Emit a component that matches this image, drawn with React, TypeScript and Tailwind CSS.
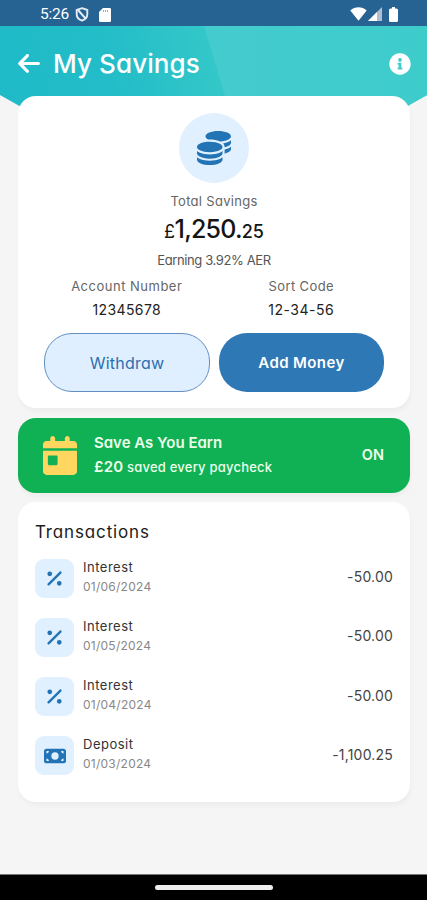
import { FaArrowLeft, FaCalendarDay, FaCoins, FaMoneyBill, FaPercent } from "react-icons/fa6";
import { FaInfoCircle } from "react-icons/fa";

const transactions = [
  { id: 1, title: "Interest", date: "01/06/2024", amount: "-50.00", icon: FaPercent },
  { id: 2, title: "Interest", date: "01/05/2024", amount: "-50.00", icon: FaPercent },
  { id: 3, title: "Interest", date: "01/04/2024", amount: "-50.00", icon: FaPercent },
  { id: 4, title: "Deposit", date: "01/03/2024", amount: "-1,100.25", icon: FaMoneyBill },
];

function StatusBar() {
  return (
    <div className="flex h-[26px] items-center bg-[#266292] pl-10 pr-[29px] text-white">
      <span className="mt-[3px] w-[30px] font-[Roboto] text-[15.5px] leading-none tracking-[-0.2px]">5:26</span>
      <svg className="ml-[5px] mt-[3px]" width="14" height="15" viewBox="0 0 14 15" fill="none" stroke="#e4edf5" strokeWidth="1.9">
        <path d="M7 1.2 12.3 3v4.2c0 3-2.2 5.3-5.3 6.5C3.9 12.5 1.7 10.2 1.7 7.2V3z" />
        <path d="M3 3l7.5 8.5" />
      </svg>
      <svg className="ml-[10px] mt-[3px]" width="12" height="14" viewBox="0 0 12 14" fill="#fff">
        <path d="M4 0h6.7Q12 0 12 1.3v11.4Q12 14 10.7 14H1.3Q0 14 0 12.7V4z" />
        <path d="M4.5 2v2M6.5 2v2M8.5 2v2" stroke="#8ea9c3" strokeWidth="1" />
      </svg>
      <svg className="ml-auto mt-[2px]" width="17" height="14" viewBox="0 0 17 14" fill="#fff">
        <path d="M.3 3.6C5-.8 12-.8 16.7 3.6L8.5 13.8z" />
      </svg>
      <svg className="ml-[1px] mt-[2px]" width="14" height="14" viewBox="0 0 14 14">
        <path d="M14 0v14H0z" fill="#b3bfd1" />
        <path d="M9 5v9H0z" fill="#fff" />
      </svg>
      <svg className="ml-[7px] mt-[2px]" width="9" height="15" viewBox="0 0 9 15" fill="#fff">
        <path d="M3 0h3v1.5h1.5Q9 1.5 9 3v10.5Q9 15 7.5 15h-6Q0 15 0 13.5V3q0-1.5 1.5-1.5H3z" />
      </svg>
    </div>
  );
}

function Header() {
  return (
    <header className="relative flex h-[70px] items-center pl-[18px] pr-4 text-white">
      <div className="absolute inset-x-0 top-0 h-[110px] overflow-hidden bg-[linear-gradient(75deg,#1fbac8_0%,#23bdc8_28%,#36c9c8_56%)] [clip-path:polygon(0_0,100%_0,100%_69px,83%_100%,17%_100%,0_69px)]">
        <div className="absolute inset-y-0 left-[204px] right-0 bg-linear-to-r from-[#44cbce] to-[#3ecccb] [clip-path:polygon(0_0,100%_0,100%_100%,33px_100%)]" />
      </div>
      <FaArrowLeft className="relative mt-[4px] h-[25px] w-[22px]" />
      <h1 className="relative ml-[13px] mt-[5px] text-[26px] font-medium leading-8 tracking-[0.1px]">My Savings</h1>
      <FaInfoCircle className="relative ml-auto mt-[5px] size-[22px]" />
    </header>
  );
}

function SavingsCard() {
  return (
    <section className="relative ml-[18px] mr-[17px] flex h-[312px] flex-col items-center rounded-[18px] bg-white pt-[17px] shadow-[1px_4px_4px_rgba(0,0,0,0.03)]">
      <div className="flex size-[70px] items-center justify-center rounded-full bg-[#e0f0ff]">
        <FaCoins className="size-[34px] text-[#2274b5]" />
      </div>
      <p className="mt-[9px] text-[13px] leading-[18px] tracking-[0.3px] text-[#666]">Total Savings</p>
      <p className="mt-[3px] flex h-8 items-baseline text-[#151515]">
        <span className="text-[18px] tracking-[-0.5px]">£</span>
        <span className="text-[25px] font-medium leading-8 tracking-[-0.8px]">1,250.</span>
        <span className="text-[18px] font-medium">25</span>
      </p>
      <p className="mt-[6px] text-[13px] leading-[18px] tracking-[-0.38px] text-[#555]">Earning 3.92% AER</p>
      <div className="mt-2 grid w-[349px] grid-cols-2 text-center">
        <div>
          <p className="text-[13px] leading-[18px] tracking-[0.5px] text-[#666]">Account Number</p>
          <p className="mt-[5px] text-[14px] leading-[19px] tracking-[0.4px] text-[#222]">12345678</p>
        </div>
        <div>
          <p className="text-[13px] leading-[18px] tracking-[0.4px] text-[#666]">Sort Code</p>
          <p className="mt-[5px] text-[14px] leading-[19px] tracking-[0.5px] text-[#222]">12-34-56</p>
        </div>
      </div>
      <div className="mt-[14px] flex gap-[9px]">
        <button className="h-[59px] w-[166px] rounded-[28px] border border-[#6290c2] bg-[#e0efff] text-[16px] tracking-[0.2px] text-[#2b70ae]">Withdraw</button>
        <button className="h-[59px] w-[165px] rounded-[28px] bg-[#2e78b6] pt-[2px] text-[15px] font-semibold tracking-[0.4px] text-white">Add Money</button>
      </div>
    </section>
  );
}

function SaveAsYouEarn() {
  return (
    <section className="ml-[18px] mr-[17px] mt-[10px] flex h-[75px] items-center rounded-[18px] bg-[#10b055] pl-[25px] pr-[26px] text-[#edffe9] shadow-[1px_4px_4px_rgba(0,0,0,0.03)]">
      <FaCalendarDay className="h-[39px] w-[34px] text-[#ffd760]" />
      <div className="mb-px ml-[17px]">
        <p className="text-[15px] font-semibold leading-6">Save As You Earn</p>
        <p className="text-[13px] font-medium leading-6 tracking-[0.22px]">
          <span className="text-[15px] font-semibold">£20</span> saved every paycheck
        </p>
      </div>
      <span className="mb-[2px] ml-auto text-[14.5px] font-semibold">ON</span>
    </section>
  );
}

function Transactions() {
  return (
    <section className="ml-[18px] mr-[17px] mt-[9px] h-[300px] rounded-[18px] bg-white px-[17px] pt-[18px] shadow-[1px_4px_4px_rgba(0,0,0,0.03)]">
      <h2 className="text-[17px] leading-6 tracking-[0.85px] text-[#1c1c1c]">Transactions</h2>
      <ul className="mt-[14px] flex flex-col gap-[19.3px]">
        {transactions.map((item) => (
          <li key={item.id} className="flex h-10 items-center">
            <div className="flex size-[39px] items-center justify-center rounded-[9px] bg-[#e0f0ff] text-[#2274b5]">
              <item.icon className={item.title === "Deposit" ? "size-[22px]" : "size-[19px]"} />
            </div>
            <div className="mb-[3px] ml-[9px]">
              <p className="text-[13px] leading-5 tracking-[0.5px] text-[#333]">{item.title}</p>
              <p className="text-[12px] leading-5 tracking-[0.25px] text-[#888]">{item.date}</p>
            </div>
            <span className="mb-[3px] ml-auto text-[14px] tracking-[0.2px] text-[#444]">{item.amount}</span>
          </li>
        ))}
      </ul>
    </section>
  );
}

export default function App() {
  return (
    <div className="flex h-[900px] w-[427px] flex-col overflow-hidden bg-[#f5f5f5] font-['Inter',sans-serif] [font-feature-settings:'cv11']">
      <StatusBar />
      <Header />
      <SavingsCard />
      <SaveAsYouEarn />
      <Transactions />
      <div className="mt-auto flex h-[26px] items-center justify-center border-t border-[#777] bg-black">
        <div className="h-[5px] w-[118px] rounded-full bg-[#eee]" />
      </div>
    </div>
  );
}
